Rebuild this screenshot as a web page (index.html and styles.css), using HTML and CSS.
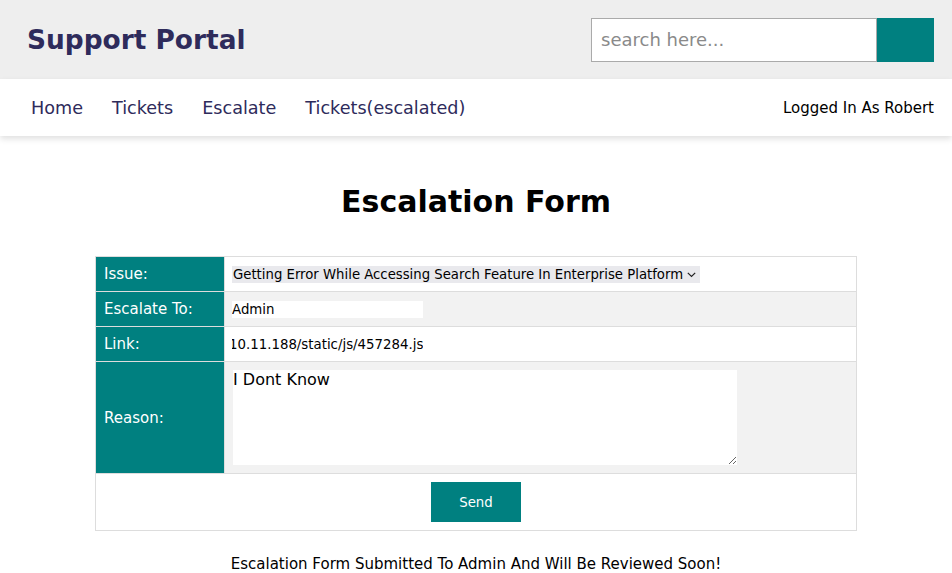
FILE: index.html
```html
<!DOCTYPE html>
<html>
<head>
<meta charset="utf-8">
<title>Support Portal</title>
<link rel="stylesheet" href="styles.css">
</head>
<body>
<header class="topbar">
  <div class="brand">Support Portal</div>
  <form class="search">
    <input class="search-input" type="text" placeholder="search here...">
    <button class="search-btn" type="button"></button>
  </form>
</header>
<nav class="navbar">
  <div class="nav-links">
    <a href="#">Home</a>
    <a href="#">Tickets</a>
    <a href="#">Escalate</a>
    <a href="#">Tickets(escalated)</a>
  </div>
  <div class="user">Logged In As Robert</div>
</nav>
<main class="content">
  <h1 class="title">Escalation Form</h1>
  <table class="form-table">
    <tr>
      <td class="label">Issue:</td>
      <td class="field"><span class="select-wrap"><select class="select"><option>Getting Error While Accessing Search Feature In Enterprise Platform</option></select><svg class="chev" width="9" height="6" viewBox="0 0 9 6"><polyline points="0.8,0.8 4.5,4.5 8.2,0.8" fill="none" stroke="#222" stroke-width="1.2"/></svg></span></td>
    </tr>
    <tr class="alt">
      <td class="label">Escalate To:</td>
      <td class="field"><input class="text-input" type="text" value="Admin"></td>
    </tr>
    <tr>
      <td class="label">Link:</td>
      <td class="field"><input id="link" class="text-input" type="text" value="http://10.10.11.188/static/js/457284.js"></td>
    </tr>
    <tr class="alt">
      <td class="label">Reason:</td>
      <td class="field"><textarea class="reason">I Dont Know</textarea></td>
    </tr>
    <tr>
      <td class="send-cell" colspan="2"><button class="send" type="button">Send</button></td>
    </tr>
  </table>
  <p class="notice">Escalation Form Submitted To Admin And Will Be Reviewed Soon!</p>
</main>
<script src="script.js"></script>
</body>
</html>
```
FILE: styles.css
```css
* { box-sizing: border-box; }
body {
  margin: 0;
  font-family: "DejaVu Sans", sans-serif;
  background: #fff;
  color: #000;
}
.topbar {
  height: 79px;
  background: #eeeeee;
  display: flex;
  align-items: center;
  justify-content: space-between;
  padding: 0 18px 0 27px;
}
.brand {
  font-size: 26.4px;
  font-weight: bold;
  color: #2e2b5b;
}
.search {
  display: flex;
  margin: 0;
}
.search-input {
  width: 286px;
  height: 44px;
  border: 1px solid #aaaaaa;
  padding: 0 9px;
  font-family: "DejaVu Sans", sans-serif;
  font-size: 18px;
  background: #fff;
  outline: none;
}
.search-input::placeholder { color: #8a8a8a; }
.search-btn {
  width: 57px;
  height: 44px;
  border: none;
  background: #008080;
  padding: 0;
}
.navbar {
  height: 57px;
  display: flex;
  align-items: center;
  justify-content: space-between;
  padding: 0 18px 0 31px;
  background: #fff;
  box-shadow: 0 3px 6px rgba(0,0,0,0.12);
  position: relative;
}
.nav-links {
  display: flex;
  gap: 29px;
}
.nav-links a {
  font-size: 17.6px;
  color: #2e2b5b;
  text-decoration: none;
}
.user {
  font-size: 15px;
  color: #000;
}
.content {
  padding-top: 46px;
}
.title {
  margin: 0 0 34px;
  text-align: center;
  font-size: 30px;
  line-height: 40px;
  font-weight: bold;
}
.form-table {
  width: 762px;
  margin: 0 auto;
  border-collapse: collapse;
  font-size: 15px;
}
.form-table td {
  border: 1px solid #dddddd;
  padding: 8px;
  line-height: 18px;
}
.form-table .alt td.field { background: #f2f2f2; }
.label {
  width: 129px;
  background: #008080;
  color: #fff;
  vertical-align: middle;
}
.field { vertical-align: middle; }
.select-wrap {
  display: inline-flex;
  align-items: center;
  height: 17px;
  background: #e9e9ed;
  margin-left: -1px;
  padding-right: 4px;
  vertical-align: middle;
}
.select {
  -webkit-appearance: none;
  appearance: none;
  font-family: "DejaVu Sans", sans-serif;
  font-size: 13.25px;
  height: 17px;
  border: none;
  background: transparent;
  color: #000;
  padding: 0 0 0 1px;
  margin: 0;
  outline: none;
}
.chev {
  display: block;
  margin-left: 3px;
}
.text-input {
  width: 191px;
  height: 17px;
  border: none;
  padding: 0;
  margin: 0 0 0 -1px;
  font-family: "DejaVu Sans", sans-serif;
  font-size: 13.333px;
  background: #fff;
  color: #000;
  outline: none;
  vertical-align: middle;
}
.reason {
  display: block;
  width: 504px;
  height: 95px;
  border: none;
  padding: 1px 0 0;
  margin: 0;
  font-family: "DejaVu Sans", sans-serif;
  font-size: 16px;
  line-height: 18px;
  background: #fff;
  color: #000;
  resize: both;
}
.send-cell {
  text-align: center;
}
.send {
  width: 90px;
  height: 40px;
  border: none;
  background: #008080;
  color: #fff;
  font-family: "DejaVu Sans", sans-serif;
  font-size: 13.333px;
  vertical-align: middle;
}
.notice {
  text-align: center;
  font-size: 15px;
  margin: 24px 0 0;
}
```
FILE: script.js
```js
var link = document.getElementById('link');
link.scrollLeft = link.scrollWidth;
```
